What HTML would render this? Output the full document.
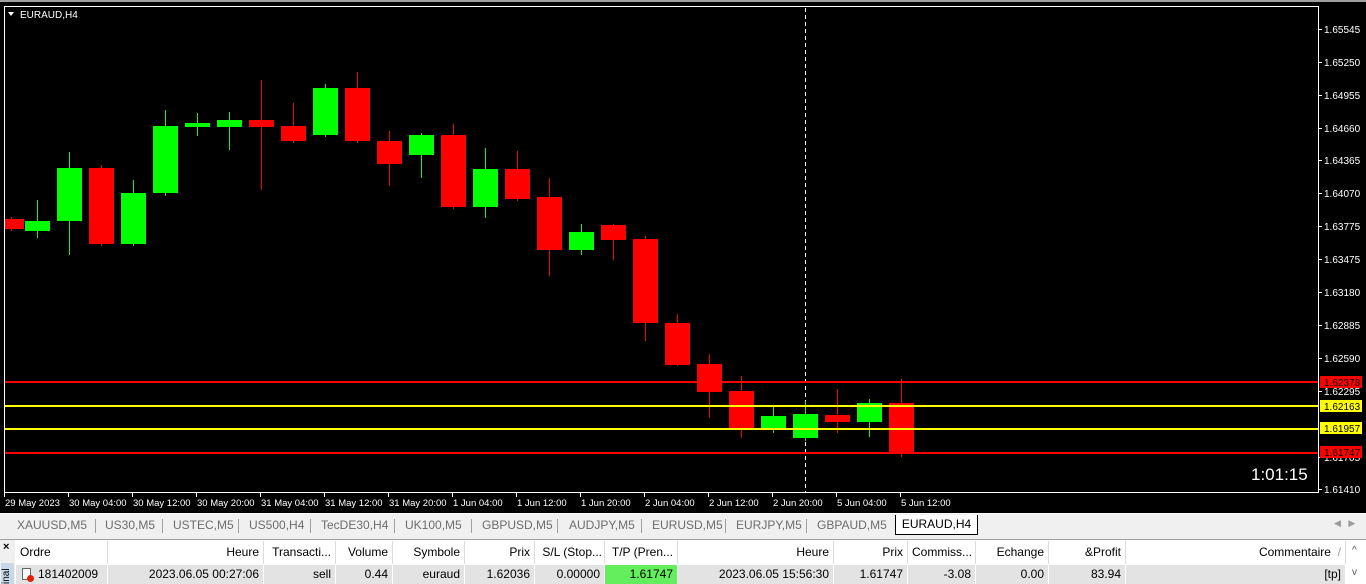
<!DOCTYPE html>
<html><head><meta charset="utf-8"><style>
body{margin:0;width:1366px;height:584px;overflow:hidden;background:#f0f0f0;font-family:"Liberation Sans",sans-serif;position:relative}
.a{position:absolute;white-space:nowrap}
.tab{position:absolute;top:516px;height:19px;font-size:12px;color:#6d6d6d;line-height:19px}
.sep{position:absolute;top:519px;width:1px;height:14px;background:#a0a0a0}
.h{position:absolute;top:541px;height:23px;line-height:23px;font-size:12px;color:#000;border-right:1px solid #dcdcdc;box-sizing:border-box;padding:0 4px;background:#fff;white-space:nowrap;overflow:hidden}
.r{position:absolute;top:565px;height:19px;line-height:19px;font-size:12px;color:#000;border-right:1px solid #fff;box-sizing:border-box;padding:0 4px;background:#e3e3e3;text-align:right;white-space:nowrap}
</style></head><body>
<div class="a" style="left:0;top:0;width:1366px;height:2px;background:#a0a0a0"></div>
<svg class="a" style="left:0;top:2px" width="1366" height="509" viewBox="0 2 1366 509" font-family="Liberation Sans" font-size="10">
<rect x="0" y="2" width="1366" height="509" fill="#000"/>
<rect x="4.5" y="6.5" width="1314" height="486" fill="none" stroke="#fff"/>
<polygon points="8,12 14,12 11,16" fill="#fff"/>
<text x="20" y="18" fill="#fff" font-size="10">EURAUD,H4</text>
<line x1="805.5" y1="8" x2="805.5" y2="492" stroke="#fff" stroke-dasharray="4,3"/>
<g id="c"></g>
<g stroke-width="2">
<line x1="5" y1="382" x2="1318" y2="382" stroke="#f00"/>
<line x1="5" y1="406" x2="1318" y2="406" stroke="#ff0"/>
<line x1="5" y1="429" x2="1318" y2="429" stroke="#ff0"/>
<line x1="5" y1="453" x2="1318" y2="453" stroke="#f00"/>
</g>
<g fill="#fff" id="ax"></g>
<g>
<rect x="1320" y="376" width="42" height="12" fill="#f00"/><text x="1324" y="386" fill="#000">1.62378</text>
<rect x="1320" y="400" width="42" height="12" fill="#ff0"/><text x="1324" y="410" fill="#000">1.62163</text>
<rect x="1320" y="422" width="42" height="12" fill="#ff0"/><text x="1324" y="432" fill="#000">1.61957</text>
<rect x="1320" y="446" width="42" height="12" fill="#f00"/><text x="1324" y="456" fill="#000">1.61747</text>
</g>
<text x="1251" y="480" fill="#fff" font-size="17">1:01:15</text>
</svg>
<div class="a" style="left:0;top:510px;width:1366px;height:3px;background:#000"></div>
<div class="a" style="left:0;top:513px;width:1366px;height:1px;background:#fff"></div>
<div class="tab" style="left:17px">XAUUSD,M5</div><div class="sep" style="left:95px"></div>
<div class="tab" style="left:105px">US30,M5</div><div class="sep" style="left:162px"></div>
<div class="tab" style="left:173px">USTEC,M5</div><div class="sep" style="left:238px"></div>
<div class="tab" style="left:249px">US500,H4</div><div class="sep" style="left:310px"></div>
<div class="tab" style="left:321px">TecDE30,H4</div><div class="sep" style="left:394px"></div>
<div class="tab" style="left:405px">UK100,M5</div><div class="sep" style="left:471px"></div>
<div class="tab" style="left:482px">GBPUSD,M5</div><div class="sep" style="left:557px"></div>
<div class="tab" style="left:569px">AUDJPY,M5</div><div class="sep" style="left:641px"></div>
<div class="tab" style="left:652px">EURUSD,M5</div><div class="sep" style="left:725px"></div>
<div class="tab" style="left:736px">EURJPY,M5</div><div class="sep" style="left:806px"></div>
<div class="tab" style="left:817px">GBPAUD,M5</div>
<div class="a" style="left:895px;top:515px;width:81px;height:19px;background:#fff;border:1px solid #000;border-top:none;font-size:12px;line-height:19px;text-align:center">EURAUD,H4</div>
<div class="a" style="left:1334px;top:518px;font-size:9px;color:#999">◀&nbsp;&nbsp;&nbsp;▶</div>
<div class="a" style="left:0;top:539px;width:1366px;height:1px;background:#a0a0a0"></div>
<div class="a" style="left:3px;top:541px;font-size:11px;font-weight:bold">×</div>
<div class="a" style="left:1px;top:563px;width:13px;height:21px;background:#c6d8ea"></div>
<div class="a" style="left:1px;top:566px;font-size:10px;transform:rotate(-90deg);transform-origin:left top;top:584px">inal</div>
<div class="a" style="left:15px;top:540px;width:1351px;height:44px;background:#fff"></div>
<div class="h" style="left:16px;width:92px">Ordre</div>
<div class="h" style="left:108px;width:156px;text-align:right">Heure</div>
<div class="h" style="left:264px;width:72px;text-align:right">Transacti...</div>
<div class="h" style="left:336px;width:57px;text-align:right">Volume</div>
<div class="h" style="left:393px;width:72px;text-align:right">Symbole</div>
<div class="h" style="left:465px;width:70px;text-align:right">Prix</div>
<div class="h" style="left:535px;width:70px;text-align:right;padding:0 2px">S/L (Stop...</div>
<div class="h" style="left:605px;width:73px;text-align:right">T/P (Pren...</div>
<div class="h" style="left:678px;width:156px;text-align:right">Heure</div>
<div class="h" style="left:834px;width:74px;text-align:right">Prix</div>
<div class="h" style="left:908px;width:68px;text-align:right">Commiss...</div>
<div class="h" style="left:976px;width:73px;text-align:right">Echange</div>
<div class="h" style="left:1049px;width:77px;text-align:right">&amp;Profit</div>
<div class="h" style="left:1126px;width:220px;text-align:right">Commentaire &nbsp;<span style="color:#999">/</span></div>
<div class="a" style="left:1352px;top:545px;font-size:10px;color:#555">^</div>
<div class="r" style="left:16px;width:92px;text-align:left;padding-left:22px">181402009</div>
<div class="a" style="left:22px;top:568px;width:9px;height:12px;border:1px solid #666;background:#fff;box-sizing:border-box"></div>
<div class="a" style="left:27px;top:575px;width:7px;height:7px;border-radius:50%;background:#e02000"></div>
<div class="r" style="left:108px;width:156px">2023.06.05 00:27:06</div>
<div class="r" style="left:264px;width:72px">sell</div>
<div class="r" style="left:336px;width:57px">0.44</div>
<div class="r" style="left:393px;width:72px">euraud</div>
<div class="r" style="left:465px;width:70px">1.62036</div>
<div class="r" style="left:535px;width:70px">0.00000</div>
<div class="r" style="left:605px;width:73px;background:#64ed5c">1.61747</div>
<div class="r" style="left:678px;width:156px">2023.06.05 15:56:30</div>
<div class="r" style="left:834px;width:74px">1.61747</div>
<div class="r" style="left:908px;width:68px">-3.08</div>
<div class="r" style="left:976px;width:73px">0.00</div>
<div class="r" style="left:1049px;width:77px">83.94</div>
<div class="r" style="left:1126px;width:220px">[tp]</div>
<div class="a" style="left:1352px;top:567px;font-size:10px;color:#555">v</div>
<script>
var C=[[11,219,229,0,217,231],[37,221,231,1,200,238],[69,168,221,1,152,255],[101,168,244,0,165,246],[133,193,244,1,180,246],[165,126,193,1,110,196],[197,123,127,1,113,136],[229,120,127,1,112,150],[261,120,127,0,80,190],[293,126,141,0,103,143],[325,88,135,1,84,137],[357,88,141,0,72,143],[389,141,164,0,131,186],[421,135,155,1,133,178],[453,135,207,0,124,209],[485,169,207,1,148,218],[517,169,199,0,151,201],[549,197,250,0,178,276],[581,232,250,1,224,255],[613,225,240,0,224,260],[645,239,323,0,236,341],[677,323,365,0,314,366],[709,364,392,0,354,418],[741,391,430,0,376,438],[773,416,429,1,405,433],[805,414,438,1,401,441],[837,415,422,0,389,433],[869,403,422,1,399,437],[901,403,453,0,379,457]];
var s='';C.forEach(function(c){var col=c[3]?'#0f0':'#f00';var x0=c[0]-12,w=25;if(x0<5){w-=5-x0;x0=5;}
s+='<line x1="'+(c[0]+0.5)+'" y1="'+c[4]+'" x2="'+(c[0]+0.5)+'" y2="'+c[5]+'" stroke="'+col+'"/><rect x="'+x0+'" y="'+c[1]+'" width="'+w+'" height="'+(c[2]-c[1])+'" fill="'+col+'"/>';});
document.getElementById('c').innerHTML=s;
var P=[["1.65545",29],["1.65250",62],["1.64955",95],["1.64660",128],["1.64365",160],["1.64070",193],["1.63775",226],["1.63475",259],["1.63180",292],["1.62885",325],["1.62590",358],["1.62295",391],["1.61705",457],["1.61410",489]];
var a='';P.forEach(function(p){a+='<rect x="1319" y="'+p[1]+'" width="3" height="1"/><text x="1324" y="'+(p[1]+4)+'">'+p[0]+'</text>';});
var T=["29 May 2023","30 May 04:00","30 May 12:00","30 May 20:00","31 May 04:00","31 May 12:00","31 May 20:00","1 Jun 04:00","1 Jun 12:00","1 Jun 20:00","2 Jun 04:00","2 Jun 12:00","2 Jun 20:00","5 Jun 04:00","5 Jun 12:00"];
T.forEach(function(t,i){var x=4+64*i;a+='<rect x="'+x+'" y="493" width="1" height="4"/><text x="'+(x+1)+'" y="506" font-size="9.5">'+t+'</text>';});
document.getElementById('ax').innerHTML=a;
</script>
</body></html>
